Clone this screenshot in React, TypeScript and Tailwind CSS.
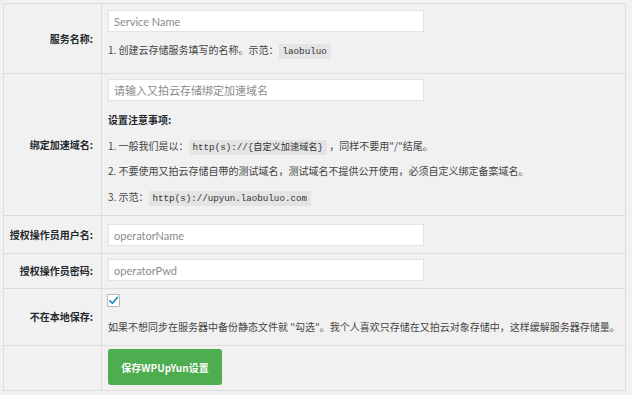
import React from "react";

const cjk = "'Noto Sans CJK SC', 'Noto Sans', sans-serif";
const mono = "'Liberation Mono', 'Noto Sans CJK SC', monospace";

function Code({ children }: { children: React.ReactNode }) {
  return (
    <code
      className="bg-[#e4e4e4] px-[4px] py-[2px] text-[9.2px] leading-none text-[#333]"
      style={{ fontFamily: mono }}
    >
      {children}
    </code>
  );
}

function Label({ children }: { children: React.ReactNode }) {
  return (
    <div className="flex items-center justify-end border-r border-[#dcdcdc] pr-[8px] text-[10px] font-bold leading-[14px] text-[#23282d]">
      {children}
    </div>
  );
}

function TextInput({ placeholder, cjkPh }: { placeholder: string; cjkPh?: boolean }) {
  return (
    <input
      type="text"
      placeholder={placeholder}
      className="block h-[22px] w-[316px] border border-[#e3e3e3] bg-white px-[5px] text-[11px] leading-[20px] text-[#333] outline-none placeholder:text-[#8c8c8c]"
      style={{ fontFamily: cjkPh ? cjk : "Lato, 'Noto Sans CJK SC', sans-serif" }}
    />
  );
}

const line = "h-[14px] whitespace-nowrap leading-[14px]";

export default function App() {
  return (
    <div className="h-[395px] w-[632px] overflow-hidden bg-[#f1f1f1] pl-[3px] pt-[3px]" style={{ fontFamily: cjk }}>
      <div className="w-[623px] border border-[#dcdcdc] bg-[#f1f1f1] text-[10px] text-[#444]">
        {/* Row 1 */}
        <div className="grid h-[69px] grid-cols-[98px_1fr]">
          <Label>服务名称:</Label>
          <div className="pl-[6px] pt-[6px]">
            <TextInput placeholder="Service Name" />
            <p className={`mt-[11px] ${line}`}>
              1. 创建云存储服务填写的名称。示范：<Code>laobuluo</Code>
            </p>
          </div>
        </div>
        {/* Row 2 */}
        <div className="grid h-[142px] grid-cols-[98px_1fr] border-t border-[#dcdcdc]">
          <Label>绑定加速域名:</Label>
          <div className="pl-[6px] pt-[5px]">
            <TextInput placeholder="请输入又拍云存储绑定加速域名" cjkPh />
            <p className={`mt-[12px] font-bold text-[#23282d] ${line}`}>设置注意事项:</p>
            <p className={`mt-[12px] ${line}`}>
              1. 一般我们是以：<Code>http(s)://{"{"}自定义加速域名{"}"}</Code> ，同样不要用"/"结尾。
            </p>
            <p className={`mt-[11px] ${line}`}>
              2. 不要使用又拍云存储自带的测试域名，测试域名不提供公开使用，必须自定义绑定备案域名。
            </p>
            <p className={`mt-[12px] ${line}`}>
              3. 示范：<Code>http(s)://upyun.laobuluo.com</Code>
            </p>
          </div>
        </div>
        {/* Row 3 */}
        <div className="grid h-[38px] grid-cols-[98px_1fr] border-t border-[#dcdcdc]">
          <Label>授权操作员用户名:</Label>
          <div className="pl-[6px] pt-[8px]">
            <TextInput placeholder="operatorName" />
          </div>
        </div>
        {/* Row 4 */}
        <div className="grid h-[35px] grid-cols-[98px_1fr] border-t border-[#dcdcdc]">
          <Label>授权操作员密码:</Label>
          <div className="pl-[6px] pt-[5px]">
            <TextInput placeholder="operatorPwd" />
          </div>
        </div>
        {/* Row 5 */}
        <div className="grid h-[57px] grid-cols-[98px_1fr] border-t border-[#dcdcdc]">
          <Label>不在本地保存:</Label>
          <div className="pl-[5px] pt-[5px]">
            <div className="flex h-[13px] w-[13px] items-center justify-center rounded-[1px] border border-[#b4b9be] bg-white">
              <svg width="11" height="11" viewBox="0 0 20 20">
                <path d="M3.5 10.5 L8 15 L17 4.5" fill="none" stroke="#1e8cbe" strokeWidth="3.2" strokeLinecap="round" strokeLinejoin="round" />
              </svg>
            </div>
            <p className={`mt-[13px] pl-[1px] ${line}`}>
              如果不想同步在服务器中备份静态文件就 "勾选"。我个人喜欢只存储在又拍云对象存储中，这样缓解服务器存储量。
            </p>
          </div>
        </div>
        {/* Row 6 */}
        <div className="grid h-[45px] grid-cols-[98px_1fr] border-t border-[#dcdcdc]">
          <div className="border-r border-[#dcdcdc]" />
          <div className="pl-[6px] pt-[3px]">
            <button
              type="button"
              className="flex h-[36px] w-[114px] items-center justify-center rounded-[3px] bg-[#4cae4f] text-[10px] font-bold text-white"
              style={{ textShadow: "0 0 1px rgba(0,0,0,0.15)" }}
            >
              保存WPUpYun设置
            </button>
          </div>
        </div>
      </div>
    </div>
  );
}
